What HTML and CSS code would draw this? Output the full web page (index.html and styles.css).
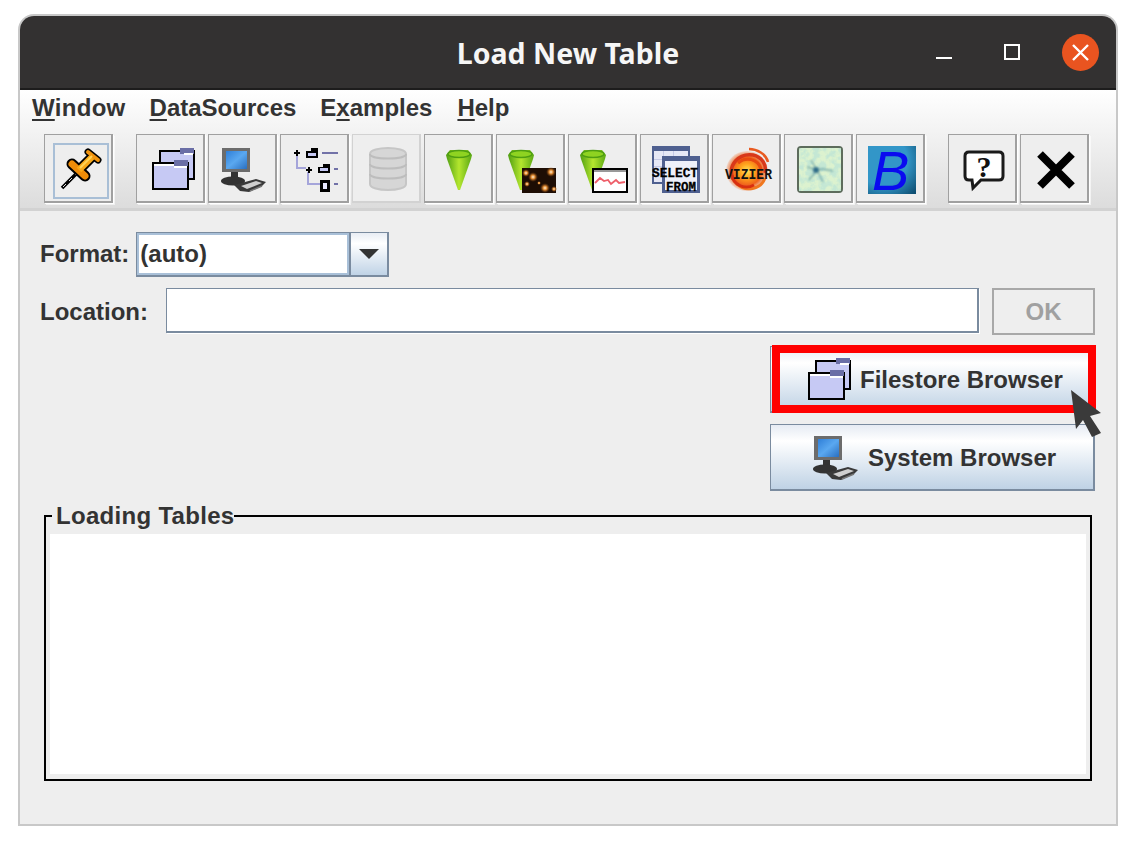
FILE: index.html
```html
<!DOCTYPE html>
<html lang="en">
<head>
<meta charset="utf-8">
<title>Load New Table</title>
<link rel="stylesheet" href="styles.css">
</head>
<body>
<svg class="defs" aria-hidden="true">
  <defs>
    <linearGradient id="screen" x1="0" y1="0" x2="1" y2="1"><stop offset="0" stop-color="#2f7fd8"/><stop offset=".5" stop-color="#5aa8f0"/><stop offset="1" stop-color="#2a6fc0"/></linearGradient>
    <linearGradient id="cone" x1="0" y1="0" x2="1" y2="0"><stop offset="0" stop-color="#4f9e12"/><stop offset=".5" stop-color="#b4e62e"/><stop offset="1" stop-color="#5aa814"/></linearGradient>
    <radialGradient id="bshade" cx=".3" cy=".3" r=".95"><stop offset=".55" stop-color="#3296c8"/><stop offset="1" stop-color="#0f4f72"/></radialGradient>
    <radialGradient id="galaxy"><stop offset="0" stop-color="#ffe25a"/><stop offset=".35" stop-color="#ffa41c"/><stop offset=".7" stop-color="#f0641c"/><stop offset="1" stop-color="#f0641c" stop-opacity=".15"/></radialGradient>
    <radialGradient id="star"><stop offset="0" stop-color="#fff0d8"/><stop offset=".4" stop-color="#e08a30"/><stop offset="1" stop-color="#6a3208" stop-opacity="0"/></radialGradient>
    <filter id="mottle" x="0" y="0" width="100%" height="100%"><feTurbulence type="fractalNoise" baseFrequency=".16" numOctaves="3" seed="4"/><feColorMatrix values="0 0 0 0 .55  0 0 0 0 .80  0 0 0 0 .66  3.4 0 0 0 -1.25"/></filter>
    <filter id="soft"><feGaussianBlur stdDeviation=".8"/></filter>
    <symbol id="folders" viewBox="0 0 48 48">
      <g shape-rendering="crispEdges">
        <path d="M12 5h36v30H42V17H12z" fill="#000"/>
        <rect x="14" y="7" width="32" height="26" fill="#c6c9f4"/>
        <rect x="33" y="3" width="14" height="6" fill="#6a6ea6"/>
        <rect x="37" y="8" width="9" height="2" fill="#fff"/>
        <rect x="5" y="17" width="37" height="28" fill="#000"/>
        <rect x="7" y="19" width="33" height="24" fill="#c6c9f4"/>
        <rect x="7" y="19" width="20" height="2" fill="#fff"/>
        <rect x="27" y="15" width="14" height="6" fill="#6a6ea6"/>
        <rect x="27" y="21" width="13" height="2" fill="#fff"/>
      </g>
    </symbol>
    <symbol id="monitor" viewBox="0 0 48 48">
      <rect x="3" y="3" width="28" height="24" fill="#6c6c6c"/>
      <rect x="7" y="6" width="21" height="18" fill="url(#screen)"/>
      <rect x="12" y="27" width="7" height="8" fill="#333"/>
      <ellipse cx="14" cy="36" rx="12" ry="4.5" fill="#333"/>
      <path d="M15 40l22-6 10 3-4 4-13 6-9-1z" fill="#3a3a3a"/>
      <path d="M22 41l15-5 6 2-15 6z" fill="#cfcfcf"/>
      <path d="M31 46l12-5" stroke="#777" stroke-width="1.5" fill="none"/>
    </symbol>
  </defs>
</svg>

<main class="window">
  <header class="titlebar">
    <span></span>
    <h1 class="title">Load New Table</h1>
    <div class="controls">
      <span class="ctl-min"></span>
      <span class="ctl-max"></span>
      <span class="ctl-close">
        <svg width="37" height="37" viewBox="0 0 37 37"><path d="M11 11l15 15M26 11L11 26" stroke="#fff" stroke-width="2.4"/></svg>
      </span>
    </div>
  </header>

  <div class="chrome">
    <nav class="menubar">
      <span class="menu menu-first"><u>W</u>indow</span>
      <span class="menu"><u>D</u>ataSources</span>
      <span class="menu">E<u>x</u>amples</span>
      <span class="menu menu-last"><u>H</u>elp</span>
    </nav>
    <div class="toolbar">
      <div class="tool-group">
        <button class="tool tool-focus">
          <svg class="ico" viewBox="0 0 48 48">
            <path d="M7 43L22 28" stroke="#000" stroke-width="3.5"/>
            <path d="M8 42l3-3m3-3l3-3m3-3l2-2" stroke="#ddd" stroke-width="1"/>
            <path d="M17 19L30 31" stroke="#000" stroke-width="11" stroke-linecap="round"/>
            <path d="M24 25L38 11" stroke="#000" stroke-width="10"/>
            <path d="M33 7L43 15" stroke="#000" stroke-width="7" stroke-linecap="round"/>
            <path d="M17 19L30 31" stroke="#ee8c08" stroke-width="7" stroke-linecap="round"/>
            <path d="M24 25L38 11" stroke="#f8a818" stroke-width="6.5"/>
            <path d="M33 7L43 15" stroke="#f09410" stroke-width="4" stroke-linecap="round"/>
            <path d="M25 23L37 11" stroke="#ffd257" stroke-width="2"/>
          </svg>
        </button>
      </div>
      <div class="tool-group">
        <button class="tool"><svg class="ico"><use href="#folders"/></svg></button>
        <button class="tool"><svg class="ico"><use href="#monitor"/></svg></button>
        <button class="tool">
          <svg class="ico" viewBox="0 0 48 48" shape-rendering="crispEdges">
            <path d="M5 11h2v11h8v2H5zM16 27h2v11h11v2H16z" fill="#a5a5da"/>
            <path d="M31 7h16v2H31zM43 23h4v2h-4zM43 38h4v2h-4z" fill="#7272a8"/>
            <path d="M3 7h2V5h2v2h2v2H7v2H5V9H3zM15 24h2v-2h2v2h2v2h-2v2h-2v-2h-2z" fill="#000"/>
            <path d="M15 6h5V3h7v10H15zM27 22h5v-3h7v9H27z" fill="#000"/>
            <path d="M17 8h8v3h-8zM29 23h8v3h-8z" fill="#c6c9f4"/>
            <path d="M29 35h10v12H29z" fill="#000"/>
            <path d="M32 38h4v6h-4z" fill="#e8e8ff"/>
          </svg>
        </button>
        <button class="tool tool-off">
          <svg class="ico" viewBox="0 0 48 48">
            <path d="M7 9c0-8 36-8 36 0v30c0 8-36 8-36 0z" fill="#d6d6d6" stroke="#c6c6c6" stroke-width="2"/>
            <path d="M7 9c0 6 36 6 36 0M7 19c0 6 36 6 36 0M7 29c0 6 36 6 36 0" fill="none" stroke="#bdbdbd" stroke-width="2"/>
          </svg>
        </button>
        <button class="tool">
          <svg class="ico" viewBox="0 0 48 48">
            <path d="M11 10l4-5h18l4 5-1 4-11 31h-2L12 14z" fill="url(#cone)"/>
            <ellipse cx="24" cy="9" rx="11" ry="3.5" fill="#8fd321" stroke="#4f9e12" stroke-width="1.5"/>
          </svg>
        </button>
        <button class="tool">
          <svg class="ico" viewBox="0 0 48 48">
            <path d="M1 10l4-5h18l4 5-1 4-11 31h-2L2 14z" fill="url(#cone)"/>
            <ellipse cx="14" cy="9" rx="11" ry="3.5" fill="#8fd321" stroke="#4f9e12" stroke-width="1.5"/>
            <rect x="15" y="23" width="34" height="25" fill="#1d0d04"/>
            <g fill="url(#star)"><circle cx="19" cy="28" r="4"/><circle cx="26" cy="32" r="5"/><circle cx="44" cy="27" r="5"/><circle cx="38" cy="43" r="5"/><circle cx="20" cy="39" r="3"/><circle cx="47" cy="44" r="3"/><circle cx="32" cy="38" r="2"/></g>
          </svg>
        </button>
        <button class="tool">
          <svg class="ico" viewBox="0 0 48 48">
            <path d="M1 10l4-5h18l4 5-1 4-11 31h-2L2 14z" fill="url(#cone)"/>
            <ellipse cx="14" cy="9" rx="11" ry="3.5" fill="#8fd321" stroke="#4f9e12" stroke-width="1.5"/>
            <rect x="14" y="24" width="34" height="23" fill="#fff" stroke="#000" stroke-width="2"/>
            <rect x="15" y="25" width="32" height="2" fill="#999"/>
            <path d="M16 38l5-5 4 3 4-1 3 4 5-4 3 3 6-1" fill="none" stroke="#ee5f6a" stroke-width="1.8"/>
          </svg>
        </button>
        <button class="tool">
          <svg class="ico" viewBox="0 0 48 48">
            <g shape-rendering="crispEdges">
              <rect x="1" y="1" width="38" height="38" fill="#4f6090"/>
              <rect x="3" y="6" width="34" height="31" fill="#e6e8f6"/>
              <path d="M3 14h34M3 21h34M12 6v31M22 6v31" stroke="#c6cae6" stroke-width="1"/>
              <rect x="11" y="11" width="38" height="37" fill="#4f6090"/>
              <rect x="14" y="16" width="32" height="29" fill="#eef0fa"/>
            </g>
            <text class="sql" x="1" y="32" textLength="46" lengthAdjust="spacingAndGlyphs">SELECT</text>
            <text class="sql" x="15" y="46" textLength="30" lengthAdjust="spacingAndGlyphs">FROM</text>
          </svg>
        </button>
        <button class="tool">
          <svg class="ico" viewBox="0 0 48 48">
            <ellipse cx="24" cy="26" rx="21" ry="20" fill="url(#galaxy)"/>
            <path d="M10 34c-6-14 6-26 20-24 9 2 14 10 12 18" fill="none" stroke="#d8381a" stroke-width="3.5"/>
            <path d="M14 39c8 8 24 6 28-6" fill="none" stroke="#f07820" stroke-width="3"/>
            <path d="M15 18c8-7 20-4 23 6" fill="none" stroke="#e84a10" stroke-width="3"/>
            <path d="M26 4c8 0 17 5 19 13" fill="none" stroke="#e85a20" stroke-width="2.5"/>
            <path d="M9 30c1 10 13 15 22 10" fill="none" stroke="#d83010" stroke-width="3"/>
            <text class="viz" x="2" y="34" textLength="47" lengthAdjust="spacingAndGlyphs">VIZIER</text>
          </svg>
        </button>
        <button class="tool">
          <svg class="ico" viewBox="0 0 48 48">
            <rect x="3" y="2" width="44" height="45" rx="3" fill="#dcf2cf" stroke="#5d6c5c" stroke-width="2"/>
            <rect x="4" y="3" width="42" height="43" filter="url(#mottle)"/>
            <g filter="url(#soft)">
              <path d="M12 22l10 3 6-1 10 2M22 25l-8 10M22 25l-6-10M22 25l6 12" fill="none" stroke="#6fa6a8" stroke-width="1.4"/>
              <circle cx="21" cy="25" r="3" fill="#2f6c88"/>
            </g>
          </svg>
        </button>
        <button class="tool">
          <svg class="ico" viewBox="0 0 48 48">
            <rect x="1" y="1" width="48" height="48" fill="url(#bshade)"/>
            <text class="bee" x="5" y="45">B</text>
          </svg>
        </button>
      </div>
      <div class="tool-group">
        <button class="tool">
          <svg class="ico" viewBox="0 0 48 48">
            <path d="M10 7h30q4 0 4 4v20q0 4-4 4H22l-8 8-1-8h-3q-4 0-4-4V11q0-4 4-4z" fill="#fff" stroke="#1a1a1a" stroke-width="3"/>
            <text class="qm" x="25" y="32">?</text>
          </svg>
        </button>
        <button class="tool">
          <svg class="ico" viewBox="0 0 48 48"><path d="M9 9l32 32M41 9L9 41" stroke="#000" stroke-width="8"/></svg>
        </button>
      </div>
    </div>
  </div>

  <section class="content">
    <div class="row-format">
      <label class="label">Format:</label>
      <div class="combo">
        <span class="combo-value">(auto)</span>
        <span class="combo-arrow"><span class="tri"></span></span>
      </div>
    </div>
    <div class="row-location">
      <label class="label">Location:</label>
      <input class="field" type="text" aria-label="Location">
      <button class="ok" disabled>OK</button>
    </div>
    <div class="browsers">
      <button class="wide wide-store">
        <svg class="ico"><use href="#folders"/></svg>
        <span class="wide-text">Filestore Browser</span>
        <span class="highlight"></span>
        <svg class="cursor" width="36" height="52" viewBox="0 0 36 52"><path d="M1 1L31 24L20 27L31 44L22 48L13 31L6 40Z" fill="#3a3a3a"/></svg>
      </button>
      <button class="wide wide-system">
        <svg class="ico"><use href="#monitor"/></svg>
        <span class="wide-text">System Browser</span>
      </button>
    </div>
    <fieldset class="panel">
      <legend class="panel-title">Loading Tables</legend>
      <div class="panel-body"></div>
    </fieldset>
  </section>
</main>
</body>
</html>
```

FILE: styles.css
```css
* { box-sizing: border-box; }

html, body { margin: 0; padding: 0; background: #fff; }

body {
  font-family: "Liberation Sans", Arial, sans-serif;
  font-weight: 700;
  font-size: 24px;
  color: #333;
}

.defs { position: absolute; width: 0; height: 0; }

.window {
  width: 1100px;
  height: 812px;
  margin: 14px 0 0 18px;
  border: 2px solid #c8c8c8;
  border-radius: 16px 16px 0 0;
  background: #eee;
  display: flex;
  flex-direction: column;
}

.titlebar {
  height: 74px;
  flex: none;
  display: grid;
  grid-template-columns: 1fr auto 1fr;
  align-items: center;
  background: #333131;
  border-bottom: 2px solid #1d1c1c;
  border-radius: 14px 14px 0 0;
  color: #fff;
}

.title {
  margin: 2px 0 0;
  font-family: "Noto Sans", sans-serif;
  font-size: 28.5px;
  font-weight: 700;
  color: #f6f6f6;
}

.controls {
  display: flex;
  justify-content: flex-end;
  align-items: center;
  padding-right: 17px;
}

.ctl-min { width: 16px; height: 2px; background: #fff; margin: 12px 52px 0 0; }
.ctl-max { width: 16px; height: 16px; border: 2px solid #fff; margin-right: 42px; }

.ctl-close {
  width: 37px;
  height: 37px;
  border-radius: 50%;
  background: #e95420;
  display: block;
}
.ctl-close svg { display: block; }

.chrome {
  flex: none;
  height: 118px;
  background: linear-gradient(#fff, #dcdcdc);
}

.menubar {
  height: 40px;
  display: flex;
  align-items: center;
  padding: 0 0 4px 12px;
}

.menu { margin-right: 24px; font-size: 24px; color: #333; }
.menu-first { letter-spacing: .3px; }
.menu-last { margin-left: 1px; }
.menu u { text-decoration-thickness: 2px; text-underline-offset: 3px; }

.toolbar {
  display: flex;
  padding: 4px 0 0 24px;
  gap: 23px;
}

.tool-group { display: flex; gap: 3px; }

.tool {
  width: 69px;
  height: 69px;
  padding: 10px 0 0 10px;
  margin: 0;
  display: flex;
  align-items: flex-start;
  justify-content: flex-start;
  background: #eee;
  border: solid #a0a0a0;
  border-width: 1px 2px 2px 1px;
  box-shadow: 1px 1px 0 #fff, 2px 2px 0 rgba(255, 255, 255, .6);
  border-radius: 0;
  font: inherit;
}

.tool-focus { position: relative; }
.tool-focus::after {
  content: "";
  position: absolute;
  left: 8px;
  top: 8px;
  width: 52px;
  height: 52px;
  border: 2px solid #a9bfd6;
}

.tool-off { border-color: #d2d2d2; box-shadow: none; }

.ico { width: 48px; height: 48px; display: block; overflow: visible; flex: none; }

.sql {
  font-family: "Liberation Mono", monospace;
  font-weight: 700;
  font-size: 13.5px;
  fill: #000;
  stroke: #000;
  stroke-width: .3px;
}
.viz {
  font-family: "Liberation Mono", monospace;
  font-weight: 700;
  font-size: 15px;
  fill: #111;
}
.bee {
  font-family: "Liberation Sans", sans-serif;
  font-style: italic;
  font-weight: 400;
  font-size: 56px;
  fill: #0a0af0;
}
.qm {
  font-family: "Liberation Serif", serif;
  font-weight: 700;
  font-size: 30px;
  text-anchor: middle;
  fill: #111;
}

.content {
  flex: 1;
  border-top: 3px solid #d2d2d2;
  padding: 21px 21px 0 20px;
  display: flex;
  flex-direction: column;
}

.label { color: #333; }

.row-format { display: flex; align-items: center; gap: 7px; height: 45px; }
.row-format .label { margin-bottom: 2px; }

.combo {
  width: 253px;
  height: 45px;
  display: flex;
  border: solid #7a8b9f;
  border-width: 1px 2px 2px 1px;
}

.combo-value {
  flex: 1;
  padding-left: 1px;
  display: flex;
  align-items: center;
  background: #fff;
  border: 2px solid #a9c0d8;
  font-size: 24px;
  color: #333;
}

.combo-arrow {
  width: 38px;
  border-left: 2px solid #7a8b9f;
  background: linear-gradient(#e8edf4, #fff 25%, #c0d3e6);
  display: flex;
  align-items: center;
  justify-content: center;
}

.tri {
  width: 0;
  height: 0;
  border-left: 10px solid transparent;
  border-right: 10px solid transparent;
  border-top: 10px solid #333;
}

.row-location {
  display: flex;
  align-items: flex-start;
  margin-top: 11px;
  height: 47px;
}

.row-location .label { line-height: 47px; margin-right: 18px; }

.field {
  flex: 1;
  min-width: 0;
  height: 45px;
  margin: 0 13px 0 0;
  padding: 0;
  background: #fff;
  border: solid #7a8b9f;
  border-width: 1px 2px 2px 1px;
  border-radius: 0;
  box-shadow: 1px 1px 0 #fff;
  outline: none;
}

.ok {
  width: 103px;
  height: 47px;
  margin: 0;
  padding: 0;
  background: #eee;
  border: 2px solid #a8a8a8;
  border-radius: 0;
  font: inherit;
  color: #a0a0a0;
}

.browsers {
  display: flex;
  flex-direction: column;
  align-items: flex-end;
  gap: 11px;
  margin-top: 11px;
}

.wide {
  position: relative;
  width: 325px;
  height: 67px;
  margin: 0;
  padding: 0;
  display: flex;
  align-items: center;
  justify-content: flex-start;
  gap: 9px;
  background: linear-gradient(#e6ebf3, #fff 25%, #bfd2e5);
  border: solid #7a8b9f;
  border-width: 1px 2px 2px 1px;
  border-radius: 0;
  font: inherit;
  color: #333;
}

.wide-store { padding-left: 32px; }
.wide-system { padding-left: 40px; }

.wide-text { margin-top: 2px; }

.highlight {
  position: absolute;
  left: 1px;
  top: -2px;
  width: 324px;
  height: 68px;
  border: 8px solid #f00;
}

.cursor {
  position: absolute;
  left: 299px;
  top: 42px;
  z-index: 1;
  overflow: visible;
}

.panel {
  margin: 12px 3px 0 4px;
  min-width: 0;
  height: 278px;
  padding: 5px 2px 4px 4px;
  border: 2px solid #000;
  border-radius: 0;
}

.panel-title {
  margin-left: 2px;
  padding: 0 0 0 4px;
  line-height: 26px;
  letter-spacing: .3px;
  color: #333;
}

.panel-body { height: 240px; margin-right: 2px; background: #fff; }
```
